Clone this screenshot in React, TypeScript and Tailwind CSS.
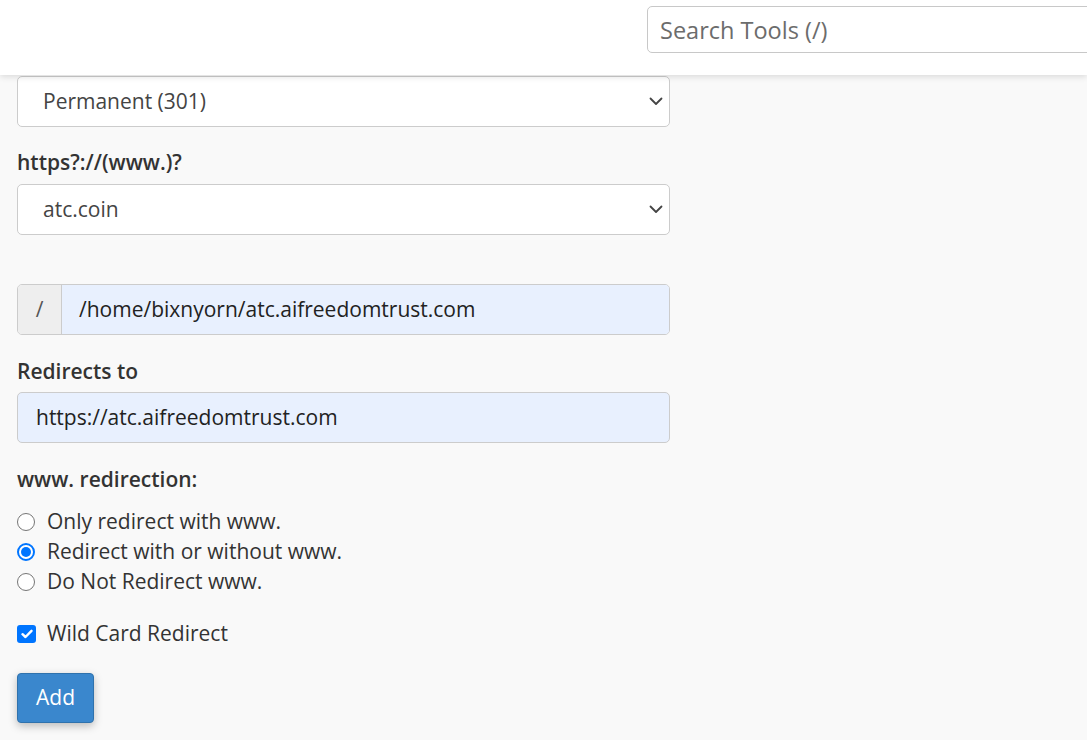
import React from "react";

function Chevron() {
  return (
    <svg width="14" height="9" viewBox="0 0 14 9" fill="none" className="shrink-0">
      <path d="M1.5 1.5 L7 7 L12.5 1.5" stroke="#444" strokeWidth="1.8" strokeLinecap="round" strokeLinejoin="round" />
    </svg>
  );
}

function Select({ value, className }: { value: string; className?: string }) {
  return (
    <div
      className={
        "w-[653px] h-[51px] bg-white border border-[#cccccc] rounded-[5px] flex items-center justify-between pl-[25px] pr-[6px] " +
        (className ?? "")
      }
    >
      <span className="text-[21px] text-[#444444]">{value}</span>
      <Chevron />
    </div>
  );
}

function Radio({ label, checked }: { label: string; checked?: boolean }) {
  return (
    <div className="h-[30px] flex items-center">
      {checked ? (
        <span className="w-[18px] h-[18px] rounded-full border-2 border-[#0075ff] bg-white flex items-center justify-center">
          <span className="w-[10px] h-[10px] rounded-full bg-[#0075ff]" />
        </span>
      ) : (
        <span className="w-[18px] h-[18px] rounded-full border-[1.5px] border-[#767676] bg-white" />
      )}
      <span className="ml-[12px] text-[21px] text-[#333333]">{label}</span>
    </div>
  );
}

export default function App() {
  return (
    <div
      className="min-h-[740px] bg-[#f9f9f9] text-[#333333]"
      style={{ fontFamily: '"Open Sans", "Noto Sans", sans-serif' }}
    >
      <header className="relative z-10 h-[75px] bg-white shadow-[0_2px_6px_rgba(0,0,0,0.12)] flex justify-end overflow-hidden">
        <div className="mt-[6px] ml-auto w-[460px] -mr-[20px] h-[47px] border border-[#c8c8c8] rounded-[5px] bg-white flex items-center pl-[12px] pt-[3px]">
          <span className="text-[23.5px] text-[#6c6c6c]">Search Tools (/)</span>
        </div>
      </header>
      <main className="pl-[17px] flex flex-col items-start">
        <Select value="Permanent (301)" className="mt-[1px]" />
        <div className="mt-[21px] h-7 leading-7 text-[21px] font-semibold text-[#333333]">
          https?://(www.)?
        </div>
        <Select value="atc.coin" className="mt-[8px]" />
        <div className="mt-[49px] w-[653px] h-[51px] flex border border-[#cccccc] rounded-[5px] overflow-hidden">
          <div className="w-[44px] bg-[#eeeeee] border-r border-[#cccccc] flex items-center justify-center text-[21px] text-[#555555]">
            /
          </div>
          <div className="flex-1 bg-[#e8f0fe] flex items-center pl-[17px] text-[21px] text-[#222222]">
            /home/bixnyorn/atc.aifreedomtrust.com
          </div>
        </div>
        <div className="mt-[22px] h-7 leading-7 text-[21px] font-semibold">Redirects to</div>
        <div className="mt-[7px] w-[653px] h-[51px] bg-[#e8f0fe] border border-[#cccccc] rounded-[5px] flex items-center pl-[18px] text-[21px] text-[#222222]">
          https://atc.aifreedomtrust.com
        </div>
        <div className="mt-[22px] h-7 leading-7 text-[21px] font-semibold">www. redirection:</div>
        <div className="mt-[14px] flex flex-col">
          <Radio label="Only redirect with www." />
          <Radio label="Redirect with or without www." checked />
          <Radio label="Do Not Redirect www." />
        </div>
        <div className="mt-[22px] h-[30px] flex items-center">
          <span className="w-[19px] h-[18px] rounded-[3px] bg-[#0075ff] flex items-center justify-center">
            <svg width="12" height="10" viewBox="0 0 12 10" fill="none">
              <path d="M1.5 5.2 L4.5 8 L10.5 1.8" stroke="white" strokeWidth="2.4" strokeLinecap="round" strokeLinejoin="round" />
            </svg>
          </span>
          <span className="ml-[11px] text-[21px] text-[#333333]">Wild Card Redirect</span>
        </div>
        <button className="mt-[24px] w-[77px] h-[50px] bg-[#3a87cd] border border-[#2f72ad] rounded-[4px] text-white text-[21px] shadow-[0_3px_8px_rgba(0,0,0,0.25)]">
          Add
        </button>
      </main>
    </div>
  );
}
